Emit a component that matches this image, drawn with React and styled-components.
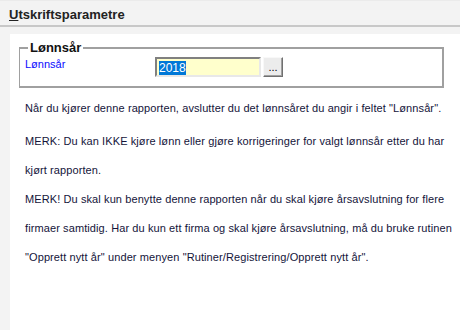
import React from "react";
import styled, { createGlobalStyle } from "styled-components";

const Global = createGlobalStyle`
  html, body {
    margin: 0;
    padding: 0;
    background: #f3f3f3;
    font-family: "Liberation Sans", Arial, sans-serif;
  }
`;

const Page = styled.div`
  width: 460px;
  height: 330px;
  background: #f3f3f3;
  display: flex;
  flex-direction: column;
  overflow: hidden;
`;

const Header = styled.div`
  height: 24px;
  padding-left: 9px;
  display: flex;
  align-items: flex-end;
  border-bottom: 2px solid #c8c8c8;
  border-top: 1px solid #ebebeb;
  h1 {
    margin: 0 0 3px;
    font-size: 13px;
    font-weight: bold;
    color: #222;
    u {
      text-decoration-thickness: 1px;
    }
  }
`;

const Content = styled.div`
  flex: 1;
  margin: 7px 0 0 10px;
  background: #fff;
  padding: 7px 16px 0 9px;
`;

const Fieldset = styled.fieldset`
  margin: 0;
  border: 2px solid #a0a0a0;
  border-width: 2px 2px 2px 1px;
  padding: 0 0 0 5px;
  height: 47px;
  box-sizing: border-box;
  legend {
    font-size: 13px;
    font-weight: bold;
    color: #111;
    padding: 0 2px;
    margin-left: 3px;
    line-height: 14px;
  }
`;

const Row = styled.div`
  display: flex;
  align-items: center;
  margin-top: 2px;
`;

const Label = styled.span`
  width: 130px;
  font-size: 11px;
  color: #0a0aff;
  align-self: flex-start;
  margin-top: 1px;
`;

const Input = styled.div`
  width: 106px;
  height: 20px;
  box-sizing: border-box;
  background: #ffffcc;
  border: 2px solid;
  border-color: #808080 #e8e8e8 #e8e8e8 #808080;
  font-size: 12px;
  padding: 2px 0 0 2px;
  span {
    background: #0078d7;
    color: #fff;
  }
`;

const Button = styled.button`
  width: 20px;
  height: 20px;
  margin-left: 2px;
  padding: 0;
  background: #ececec;
  border: 1px solid;
  border-color: #f8f8f8 #707070 #707070 #f8f8f8;
  box-shadow: inset -1px -1px 0 #a0a0a0;
  font-family: "Liberation Sans", Arial, sans-serif;
  font-size: 11px;
  color: #000;
  line-height: 14px;
`;

const Para = styled.p`
  margin: ${(p) => (p.first ? "6px 0 4px" : "0")};
  padding-left: 6px;
  font-size: 11px;
  letter-spacing: 0.1px;
  line-height: 29px;
  white-space: nowrap;
  color: #14143a;
`;

export default function App() {
  return (
    <Page>
      <Global />
      <Header>
        <h1>
          <u>U</u>tskriftsparametre
        </h1>
      </Header>
      <Content>
        <Fieldset>
          <legend>Lønnsår</legend>
          <Row>
            <Label>Lønnsår</Label>
            <Input>
              <span>2018</span>
            </Input>
            <Button>...</Button>
          </Row>
        </Fieldset>
        <Para first>
          Når du kjører denne rapporten, avslutter du det lønnsåret du angir i
          feltet "Lønnsår".
        </Para>
        <Para>
          MERK: Du kan IKKE kjøre lønn eller gjøre korrigeringer for valgt
          lønnsår etter du har
          <br />
          kjørt rapporten.
        </Para>
        <Para>
          MERK! Du skal kun benytte denne rapporten når du skal kjøre
          årsavslutning for flere
          <br />
          firmaer samtidig. Har du kun ett firma og skal kjøre årsavslutning, må
          du bruke rutinen
          <br />
          "Opprett nytt år" under menyen "Rutiner/Registrering/Opprett nytt år".
        </Para>
      </Content>
    </Page>
  );
}
